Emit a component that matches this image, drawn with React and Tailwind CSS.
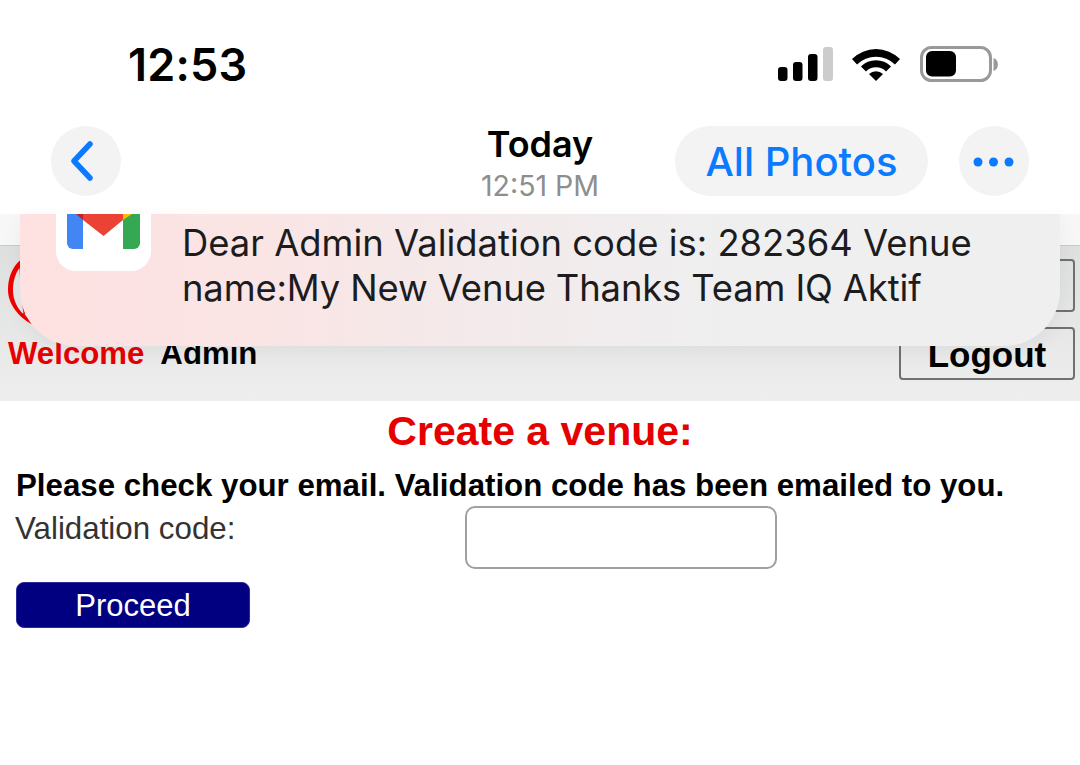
// iPhone photo viewer showing a venue validation page, with a Gmail notification on top
import React from 'react';

const Signal = () => (
  <svg width="55" height="36" viewBox="0 0 55 36" className="block">
    <rect x="0" y="21" width="9.500" height="14" rx="3" fill="#000" />
    <rect x="15" y="16" width="9.500" height="19" rx="3" fill="#000" />
    <rect x="30" y="8" width="9.500" height="27" rx="3" fill="#000" />
    <rect x="45" y="1" width="10" height="34" rx="3" fill="#ccc" />
  </svg>
);

const Wifi = () => (
  <svg width="48" height="36" viewBox="0 0 48 36" className="block">
    <path d="M0 13 A34 34 0 0 1 48 13 L43 18.500 A27 27 0 0 0 5 18.500 Z" fill="#000" />
    <path d="M9 23 A21 21 0 0 1 39 23 L34 28 A14 14 0 0 0 14 28 Z" fill="#000" transform="translate(0 -2.500)" />
    <path d="M17 28 A10 10 0 0 1 31 28 L24 35 Z" fill="#000" />
  </svg>
);

const Battery = () => (
  <svg width="78" height="36" viewBox="0 0 78 36" className="block">
    <rect x="1.500" y="1.500" width="69" height="33" rx="10" fill="none" stroke="#999" strokeWidth="3" />
    <rect x="6" y="5" width="30" height="25.500" rx="6" fill="#000" />
    <path d="M73.500 12 A7 7 0 0 1 73.500 25 Z" fill="#999" />
  </svg>
);

const Chevron = () => (
  <svg width="24" height="40" viewBox="0 0 24 40" className="block">
    <path d="M20 3 L4 20 L20 37" fill="none" stroke="#0a7aff" strokeWidth="5.500" strokeLinecap="round" strokeLinejoin="round" />
  </svg>
);

const Dots = () => (
  <svg width="42" height="10" viewBox="0 0 42 10" className="block">
    <circle cx="5" cy="5" r="4.500" fill="#0a7aff" />
    <circle cx="20.500" cy="5" r="4.500" fill="#0a7aff" />
    <circle cx="36" cy="5" r="4.500" fill="#0a7aff" />
  </svg>
);

// only the lower part of the mark shows, the rest is cut by the notification's top
const GmailIcon = () => (
  <svg width="95" height="95" viewBox="0 0 95 95" className="block">
    <path d="M11 38 H27 V73 H17 A6 6 0 0 1 11 67 Z" fill="#4285f4" />
    <path d="M67 38 H84 V67 A6 6 0 0 1 78 73 H67 Z" fill="#34a853" />
    <path d="M27 38 H67 V44 L47.500 60 L27 44 Z" fill="#ea4335" />
    <path d="M20 38 H27 V44 Z" fill="#c5221f" />
    <path d="M67 38 H76 L67 44 Z" fill="#fbbc04" />
  </svg>
);

// what is left of the round logo beside the notification
const LogoArc = () => (
  <svg width="34" height="69" viewBox="0 0 34 69" className="block">
    <path d="M13.500 1 C5 8 1 19 1 31 C1 47 15 62 31 68 C24 62 21 60 17.500 55 L19.500 52.500 C16.500 40 14.500 20 13.500 1 Z" fill="#f00000" />
    <path d="M12.500 9 C8 15 6 23 6 31 C6 40 9.500 47 13.500 52 C14.500 53.500 16 55 16.500 54.500 C14.500 40 13 24 12.500 9 Z" fill="#e6e7e7" />
  </svg>
);

const App = () => {
  return (
    <div className="relative w-[1080px] h-[765px] overflow-hidden bg-white font-['Inter',sans-serif]">
      {/* Status bar */}
      <div className="h-[126px] flex items-start justify-between pl-[128px] pr-[82px] pt-[46px]">
        <span className="text-[45px] leading-[38px] font-semibold text-black tracking-[0.2px]">12:53</span>
        <div className="flex items-start gap-[19px]">
          <Signal />
          <div className="mr-[1px]"><Wifi /></div>
          <Battery />
        </div>
      </div>

      {/* Photo viewer nav */}
      <div className="relative h-[88px] flex items-start justify-between pl-[51px] pr-[51px]">
        <button className="w-[70px] h-[70px] rounded-full bg-[#f3f3f4] flex items-center justify-center pr-[8px]">
          <Chevron />
        </button>
        <div className="flex items-start gap-[31px]">
          <button className="w-[253px] h-[70px] pt-[1px] rounded-full bg-[#f3f3f4] text-[#0a7aff] text-[40px] font-medium flex items-center justify-center">All Photos</button>
          <button className="w-[70px] h-[70px] pt-[2px] rounded-full bg-[#f3f3f4] flex items-center justify-center">
            <Dots />
          </button>
        </div>
        <div className="absolute left-0 right-0 top-[-1px] flex flex-col items-center">
          <span className="text-[36px] leading-[38px] font-semibold text-black">Today</span>
          <span className="text-[28.500px] leading-[32px] mt-[7px] text-[#8e8e8e]">12:51 PM</span>
        </div>
      </div>

      {/* Web page */}
      <div className="font-['Liberation_Sans',sans-serif]">
        <div className="h-[32px] bg-[#f7f7f7] border-b border-[#c9c9c9]" />
        <div className="h-[155px] bg-gradient-to-b from-[#dedfdf] to-[#eeeeee] pt-[13px] pl-[7px] pr-[5px] pb-[22px] flex flex-col">
          <div className="h-[68px] flex items-start justify-between">
            <LogoArc />
            <div className="w-[175px] h-[53px] border-2 border-[#707070] rounded-[4px]" />
          </div>
          <div className="h-[52px] flex items-center justify-between">
            <div className="flex items-center gap-[16px] pl-[1px] pt-[2px] text-[31.200px] font-bold">
              <span className="text-[#e60000]">Welcome</span>
              <span className="text-black">Admin</span>
            </div>
            <button className="w-[176px] h-[53px] border-2 border-[#707070] rounded-[4px] text-[35px] font-bold text-black">Logout</button>
          </div>
        </div>
        <div className="px-[16px] pt-[6px]">
          <h1 className="text-center text-[41px] leading-[48px] font-bold text-[#e60000]">Create a venue:</h1>
          <p className="mt-[9px] text-[31.250px] leading-[44px] font-bold text-black">Please check your email. Validation code has been emailed to you.</p>
          <div className="flex items-start mt-[-2px]">
            <label className="w-[450px] pt-[3px] -ml-[1px] text-[31.300px] leading-[40px] text-[#333]">Validation code:</label>
            <input className="w-[312px] h-[63px] border-2 border-[#a0a0a0] rounded-[10px] bg-white outline-none" />
          </div>
          <button className="mt-[13px] w-[234px] h-[46px] rounded-[8px] bg-[#000080] border border-[#2a2a9a] text-white text-[31px] leading-none">Proceed</button>
        </div>
      </div>

      {/* Notification banner sliding over the page */}
      <div className="absolute left-[20px] top-[214px] w-[1040px] h-[132px] overflow-hidden rounded-b-[56px] shadow-[0_6px_20px_rgba(0,0,0,0.05)] bg-[linear-gradient(90deg,#fee1e1,#fae5e5_25%,#f3eaeb_45%,#efeff0_70%)] flex items-start pl-[36px]">
        <div className="w-[95px] h-[95px] mt-[-38px] rounded-[20px] bg-white shrink-0">
          <GmailIcon />
        </div>
        <p className="ml-[31px] mt-[7px] w-[830px] text-[36.400px] leading-[45px] text-[#1c1c1e] font-['Inter',sans-serif]">
          <span className="block">Dear Admin Validation code is: 282364 Venue</span>
          <span className="block tracking-[-0.13px]">name:My New Venue Thanks Team IQ Aktif</span>
        </p>
      </div>
    </div>
  );
};

export default App;
